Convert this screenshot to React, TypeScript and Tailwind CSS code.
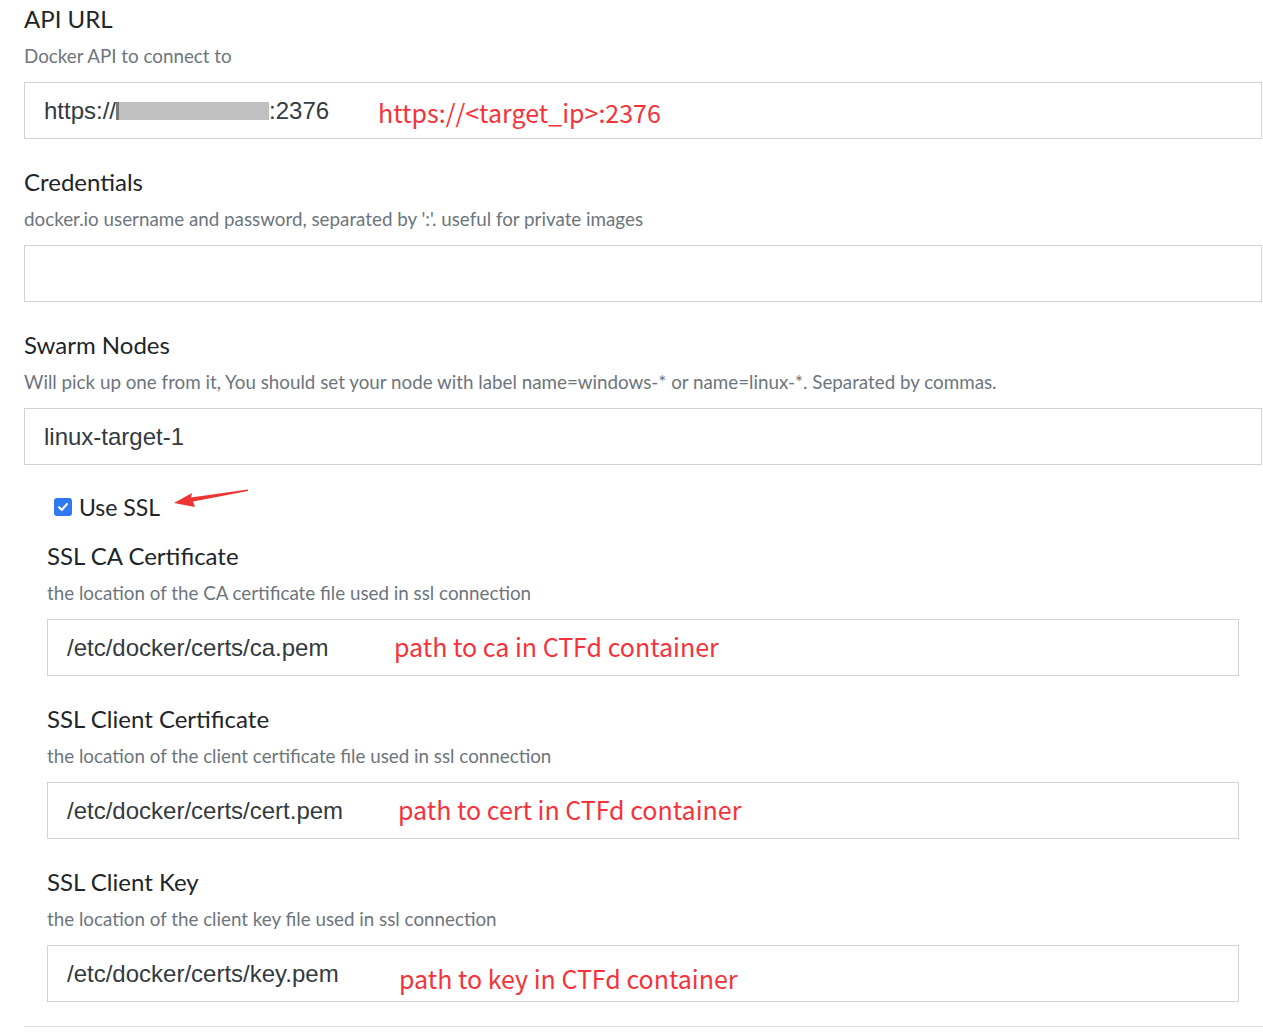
import React from 'react';

const lato = { fontFamily: 'Lato, "Liberation Sans", sans-serif' };

interface FieldProps {
  label: string;
  desc: string;
  value?: React.ReactNode;
  note?: string;
  noteX?: number;
  noteY?: number;
}

const Field: React.FC<FieldProps> = ({ label, desc, value, note, noteX = 0, noteY = 0 }) => (
  <div className="mb-[24px]">
    <div className="text-[24px] leading-[38px] text-[#212529] font-['Lato',sans-serif]">{label}</div>
    <div className="text-[18.8px] leading-[36px] text-[#6c757d] font-['Lato',sans-serif]">{desc}</div>
    <div className="relative mt-[8px] h-[57px] border border-[#ced4da] bg-white flex items-center pl-[19px] text-[24px] text-[#333a40] font-['Liberation_Sans',Arial,sans-serif]">
      {value}
      {note && (
        <span
          className="absolute text-[25px] text-[#f5323a] font-['Noto_Sans_CJK_SC','Noto_Sans',sans-serif] whitespace-nowrap"
          style={{ left: noteX, top: noteY }}
        >
          {note}
        </span>
      )}
    </div>
  </div>
);

export default function App() {
  return (
    <div className="w-[1263px] h-[1032px] bg-white overflow-hidden" style={lato}>
      <div className="pl-[24px] pr-[1px]">
        <Field
          label="API URL"
          desc="Docker API to connect to"
          value={
            <span className="flex items-center">
              https://
              <span className="inline-block w-[3px] h-[18px] bg-[#777]" />
              <span className="inline-block w-[150px] h-[18px] bg-[#c0c0c0]" />
              :2376
            </span>
          }
          note="https://<target_ip>:2376"
          noteX={353}
          noteY={11}
        />
        <Field
          label="Credentials"
          desc="docker.io username and password, separated by ':'. useful for private images"
        />
        <Field
          label="Swarm Nodes"
          desc="Will pick up one from it, You should set your node with label name=windows-* or name=linux-*. Separated by commas."
          value="linux-target-1"
        />
      </div>

      <div className="pl-[47px] pr-[24px]">
        <div className="relative flex items-center h-[36px] pl-[7px]">
          <span className="w-[18px] h-[18px] rounded-[3px] bg-[#2f78f2] flex items-center justify-center">
            <svg width="12" height="12" viewBox="0 0 12 12" fill="none">
              <path d="M2 6.3 L4.8 9 L10 3" stroke="white" strokeWidth="2" strokeLinecap="round" strokeLinejoin="round" />
            </svg>
          </span>
          <span className="ml-[7px] text-[23px] text-[#212529] font-['Lato',sans-serif]">Use SSL</span>
          <svg className="absolute left-[125px] top-[-1px]" width="78" height="22" viewBox="0 0 78 22">
            <path d="M2 15 L20 5 L19 9.5 L76 1.5 L76 3 L21 13.5 L23 19 Z" fill="#ee3333" />
          </svg>
        </div>
        <div className="mt-[12px]">
          <Field
            label="SSL CA Certificate"
            desc="the location of the CA certificate file used in ssl connection"
            value="/etc/docker/certs/ca.pem"
            note="path to ca in CTFd container"
            noteX={346}
            noteY={8}
          />
          <Field
            label="SSL Client Certificate"
            desc="the location of the client certificate file used in ssl connection"
            value="/etc/docker/certs/cert.pem"
            note="path to cert in CTFd container"
            noteX={350}
            noteY={8}
          />
          <Field
            label="SSL Client Key"
            desc="the location of the client key file used in ssl connection"
            value="/etc/docker/certs/key.pem"
            note="path to key in CTFd container"
            noteX={351}
            noteY={14}
          />
        </div>
      </div>
      <div className="ml-[24px] border-t border-[#e0e0e0]" />
    </div>
  );
}
